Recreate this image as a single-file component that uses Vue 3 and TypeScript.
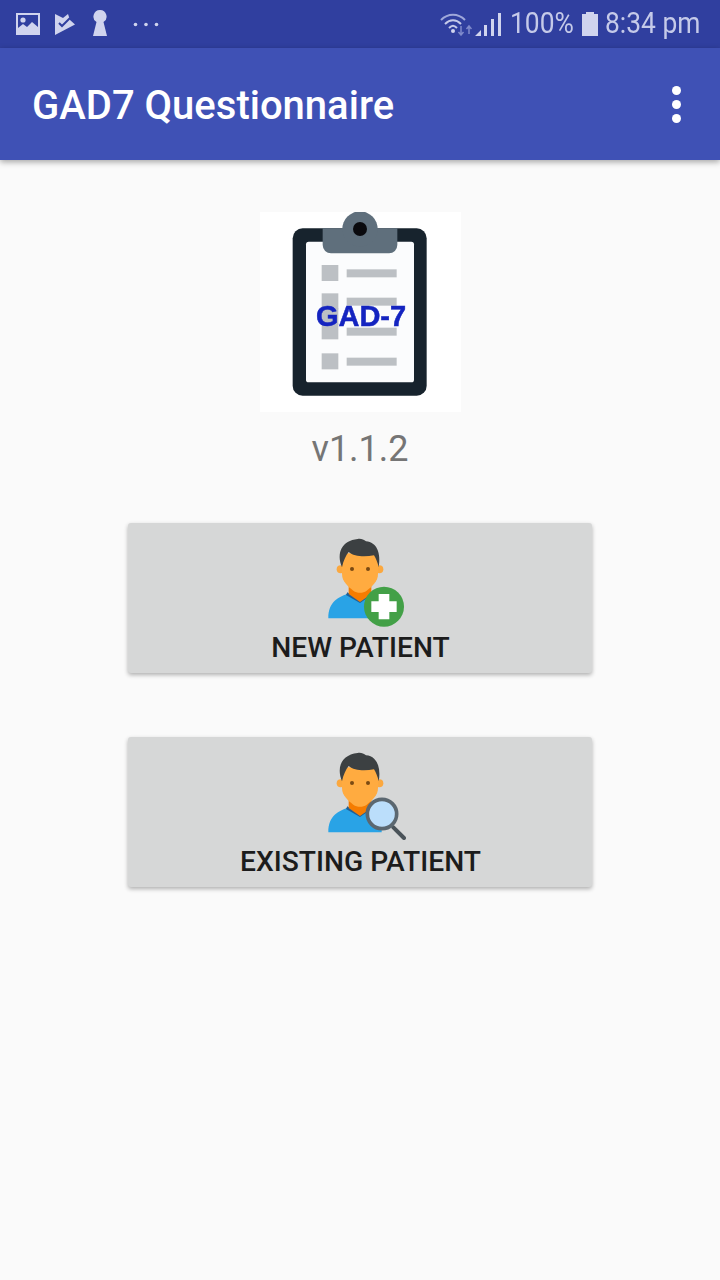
<script setup lang="ts">
const items = [{ label: 'NEW PATIENT', kind: 'new' }, { label: 'EXISTING PATIENT', kind: 'find' }]
const rows = [195, 280, 370, 460]
</script>

<template>
  <div class="page">
    <div class="status">
      <div class="group left">
        <svg class="i1" width="24" height="22" viewBox="0 0 24 22"><path fill="#d0d4ee" fill-rule="evenodd" d="M0 0h24v22H0zM2 2v18h20V2z"/><path fill="#d0d4ee" d="M2 20v-5l5-4 4 3 5-5 6 5v6z"/><circle cx="7" cy="7" r="2.6" fill="#d0d4ee"/></svg>
        <svg class="i2" width="20" height="21" viewBox="0 0 20 21"><path fill="#d0d4ee" d="M0 0l8 4 5-4 2 6 5 4.500L0 21z"/><path fill="none" stroke="#303f9f" stroke-width="2" d="M4 9l3 3 8-8"/></svg>
        <svg class="i3" width="14" height="26" viewBox="0 0 14 26"><path fill="#d0d4ee" d="M7 0a6.500 6.500 0 0 1 3.500 12L14 26H0l3.500-14A6.500 6.500 0 0 1 7 0z"/></svg>
        <svg class="i4" width="26" height="5" viewBox="0 0 26 5"><circle cx="2.500" cy="2.500" r="1.800" fill="#d0d4ee"/><circle cx="13" cy="2.500" r="1.800" fill="#d0d4ee"/><circle cx="23.500" cy="2.500" r="1.800" fill="#d0d4ee"/></svg>
      </div>
      <div class="group right">
        <svg width="32" height="24" viewBox="0 0 32 24"><g fill="none" stroke="#9fa8da" stroke-width="2"><path d="M1 8c7-7 17-7 24 0"/><path d="M5 12c5-5 11-5 16 0" stroke="#c5cae9"/><path d="M9 16c3-3 5-3 8 0" stroke="#c5cae9"/></g><circle cx="13" cy="19" r="2" fill="#d0d4ee"/><path stroke="#7f8acb" stroke-width="1.500" fill="none" d="M21 14v9m-2.500-3l2.500 3 2.500-3M29 22v-8m-2.500 3l2.500-3 2.500 3"/></svg>
        <svg class="sig" width="26" height="23" viewBox="0 0 26 23"><path fill="#d0d4ee" d="M0 23l6-6v6zM9 12h3v11H9zM16 6h3v17h-3zM23 0h3v23h-3z"/></svg>
        <span class="pct">100%</span>
        <svg class="bat" width="16" height="24" viewBox="0 0 16 24"><path fill="#d0d4ee" d="M4 2V0h8v2h4v22H0V2z"/></svg>
        <span class="time">8:34 pm</span>
      </div>
    </div>
    <header class="bar">
      <h1>GAD7 Questionnaire</h1>
      <div class="menu"><i></i><i></i><i></i></div>
    </header>
    <main class="main">
      <svg class="logo" width="201" height="200" viewBox="30 36 603 600">
        <rect x="30" y="36" width="603" height="600" fill="#fff"/>
        <rect x="128" y="85" width="402" height="502" rx="30" fill="#17232d"/>
        <rect x="168" y="125" width="324" height="422" rx="8" fill="#fbfcfd"/>
        <path d="M218 85h224v50a25 25 0 0 1-25 25H243a25 25 0 0 1-25-25z" fill="#5f6f7c"/>
        <circle cx="330" cy="87" r="53" fill="#5f6f7c"/>
        <circle cx="330" cy="87" r="21" fill="#0a0a0e"/>
        <g v-for="y in rows" :key="y" fill="#bcc0c4">
          <rect x="215" :y="y" width="50" height="48"/>
          <rect x="290" :y="y + 13" width="150" height="24"/>
        </g>
        <rect x="215" y="325" width="50" height="50" fill="#bcc0c4"/>
        <text x="333" y="378" text-anchor="middle" class="gad">GAD-7</text>
      </svg>
      <div class="ver">v1.1.2</div>
      <div class="buttons">
        <button v-for="b in items" :key="b.kind" class="btn">
          <svg class="pic" width="120" height="100" viewBox="0 0 360 300">
            <path d="M85 265c0-50 30-65 65-75l30 15 25-15 40 20v55z" fill="#29a3e6"/>
            <path d="M138 195l42 24 38-26v-8l-38 26-38-24z" fill="#1f5f96"/>
            <path d="M146 160h68v32l-34 24-34-24z" fill="#f57c00"/>
            <circle cx="122" cy="118" r="12" fill="#fba83f"/>
            <circle cx="238" cy="118" r="12" fill="#fba83f"/>
            <path d="M126 70h108v62c0 22-18 38-34 50-12 8-28 8-40 0-16-12-34-28-34-50z" fill="#ffab40"/>
            <path d="M126 112c-18-44 0-80 47-85 10-2 18 2 25 7 32 2 46 36 38 78-3-14-8-26-14-36-28 5-60 4-76-10-8 10-16 26-20 46z" fill="#3c4042"/>
            <circle cx="156" cy="117" r="6" fill="#7b4a12"/>
            <circle cx="204" cy="117" r="6" fill="#7b4a12"/>
            <template v-if="b.kind === 'new'">
              <circle cx="252" cy="230" r="60" fill="#43a047"/>
              <path d="M236 192h32v22h22v32h-22v22h-32v-22h-22v-32h22z" fill="#fff"/>
            </template>
            <template v-else>
              <path d="M280 250l32 32" stroke="#4a5359" stroke-width="12" stroke-linecap="round"/>
              <circle cx="246" cy="210" r="44" fill="#bbdefb" stroke="#5b6770" stroke-width="11"/>
            </template>
          </svg>
          <span class="lbl">{{ b.label }}</span>
        </button>
      </div>
    </main>
  </div>
</template>

<style>
html, body { margin: 0; background: #fafafa; }
</style>

<style scoped>
.page { width: 720px; height: 1280px; background: #fafafa; font-family: Roboto, sans-serif; overflow: hidden; }
.status { height: 48px; background: #303f9f; display: flex; justify-content: space-between; align-items: center; color: #c5cae9; font-size: 30px; }
.group { display: flex; align-items: center; }
.left { padding-left: 16px; }
.i2 { margin-left: 15px; }
.i3 { margin-left: 18px; margin-top: -2px; }
.i4 { margin-left: 26px; }
.right { padding-right: 20px; }
.sig { margin-left: 3px; }
.pct, .time { display: block; margin-top: -3px; white-space: nowrap; transform: scaleX(.88); transform-origin: left center; }
.pct { margin-left: 9px; width: 62px; }
.bat { margin-left: 10px; }
.time { margin-left: 7px; width: 95px; }
.bar { height: 112px; background: #3f51b5; display: flex; align-items: center; justify-content: space-between; padding: 0 39px 0 32px; box-shadow: 0 2px 6px rgba(0,0,0,.35); position: relative; }
h1 { margin: 3px 0 0; color: #fff; font-size: 40px; font-weight: 500; }
.menu { display: flex; flex-direction: column; gap: 5px; }
.menu i { width: 9px; height: 9px; border-radius: 50%; background: #fff; display: block; }
.main { display: flex; flex-direction: column; align-items: center; padding-top: 52px; }
.logo { display: block; filter: blur(0.7px); }
.ver { margin-top: 15px; font-size: 36px; line-height: 44px; color: #757575; }
.buttons { margin-top: 52px; display: flex; flex-direction: column; gap: 64px; }
.btn { width: 464px; height: 150px; box-sizing: border-box; border: 0; padding: 7px 0 0; background: #d6d7d7; border-radius: 3px; box-shadow: 0 2px 4px rgba(0,0,0,.3); display: flex; flex-direction: column; align-items: center; font-family: Roboto, sans-serif; }
.pic { display: block; filter: blur(0.7px); }
.lbl { margin-top: 1px; padding-left: 1px; font-size: 28.2px; line-height: 34px; font-weight: 500; color: #1c1c1c; }
.gad { font-family: "Liberation Sans", sans-serif; font-weight: 700; font-size: 87px; fill: #1424c0; stroke: #1424c0; stroke-width: 1.5px; }
</style>
